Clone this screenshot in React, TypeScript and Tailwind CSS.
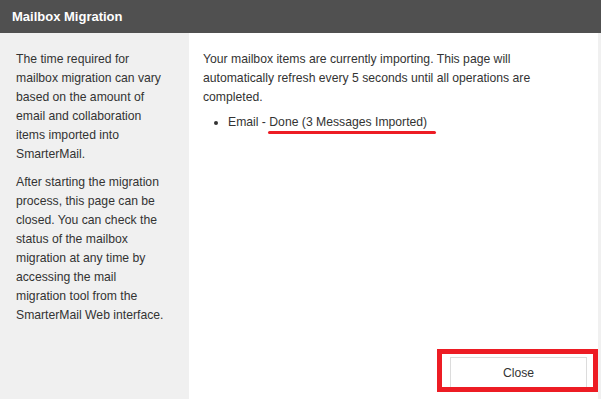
export default function App() {
  return (
    <div className="flex h-[399px] w-[601px] flex-col overflow-hidden bg-white font-['Liberation_Sans',Arial,sans-serif] text-[12.2px] leading-[19px] text-[#333]">
      {/* Title bar */}
      <div className="flex h-[33px] shrink-0 items-center bg-[#505050] px-[12px]">
        <h1 className="text-[13px] font-bold text-white">Mailbox Migration</h1>
      </div>

      <div className="flex flex-1">
        {/* Help sidebar */}
        <aside className="w-[189px] shrink-0 bg-[#f0f0f0] pl-[16px] pr-[21px] pt-[17px]">
          <p className="mb-[9px]">
            The time required for mailbox migration can vary based on the amount of email and
            collaboration items imported into SmarterMail.
          </p>
          <p>
            After starting the migration process, this page can be closed. You can check the status
            of the mailbox migration at any time by accessing the mail migration tool from the
            SmarterMail Web interface.
          </p>
        </aside>

        {/* Status */}
        <main className="flex flex-1 flex-col justify-between">
          <div className="pl-[14px] pr-[20px] pt-[17px]">
            <p className="mb-[6px]">
              Your mailbox items are currently importing. This page will automatically refresh every
              5 seconds until all operations are completed.
            </p>
            <ul className="list-disc pl-[25px]">
              <li>
                Email -{' '}
                <span className="relative">
                  Done (3 Messages Imported)
                  <span className="absolute -bottom-[5px] -left-[1px] -right-[9px] h-[3px] rounded-full bg-[#ed1c24]" />
                </span>
              </li>
            </ul>
          </div>

          <div className="flex justify-end pb-[9px] pr-[11px]">
            <div className="relative">
              <button className="h-[33px] w-[137px] border border-[#dcdcdc] bg-white text-[12.2px] text-[#333]">
                Close
              </button>
              <div className="pointer-events-none absolute -bottom-[2px] -left-[13px] -right-[11px] -top-[8px] border-[5px] border-[#ed1c24]" />
            </div>
          </div>
        </main>

        <div className="w-[3px] shrink-0 bg-[#f0f0f0]" />
      </div>
    </div>
  )
}
